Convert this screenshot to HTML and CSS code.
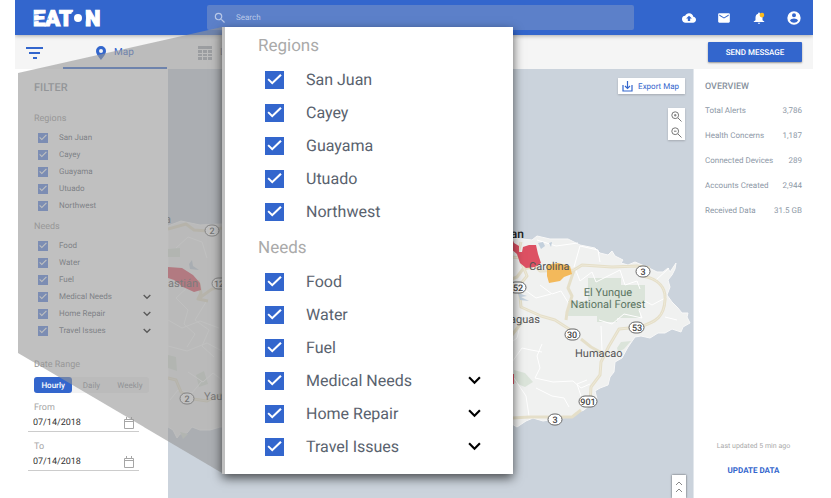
FILE: index.html
```html
<!DOCTYPE html>
<html lang="en">
<head>
<meta charset="utf-8">
<meta name="viewport" content="width=device-width, initial-scale=1">
<title>Eaton Map</title>
<link rel="stylesheet" href="styles.css">
</head>
<body>
<div class="app">
  <header class="topbar">
    <a class="logo" href="#" aria-label="Eaton">
      <svg width="68" height="22" viewBox="0 0 68 22">
        <g class="logo-text"><text x="-1" y="19">EAT</text><text x="51" y="19">N</text></g>
        <path d="M0 8 15 6.500M0 14 15 12" stroke="#3366cd" stroke-width=".6"/>
        <circle cx="44" cy="11" r="8" fill="#3366cd"/>
        <circle cx="44" cy="11" r="4" fill="#fff"/>
      </svg>
    </a>
    <label class="search">
      <svg width="14" height="14" viewBox="0 0 24 24"><path fill="currentColor" d="M15.500 14h-.79l-.28-.27A6.470 6.470 0 0 0 16 9.500 6.500 6.500 0 1 0 9.500 16c1.610 0 3.090-.59 4.230-1.570l.27.28v.79l5 4.990L20.490 19l-4.990-5zm-6 0C7.010 14 5 11.990 5 9.500S7.010 5 9.500 5 14 7.010 14 9.500 11.990 14 9.500 14z"/></svg>
      <input type="text" placeholder="Search" aria-label="Search">
    </label>
    <nav class="actions">
      <button aria-label="Upload"><svg width="14" height="14" viewBox="0 0 24 24"><path fill="currentColor" d="M19.350 10.040A7.490 7.490 0 0 0 12 4C9.110 4 6.600 5.640 5.350 8.040A5.994 5.994 0 0 0 0 14c0 3.310 2.690 6 6 6h13c2.760 0 5-2.240 5-5 0-2.640-2.050-4.780-4.650-4.960zM14 13v4h-4v-4H7l5-5 5 5h-3z"/></svg></button>
      <button aria-label="Mail"><svg width="14" height="14" viewBox="0 0 24 24"><path fill="currentColor" d="M20 4H4c-1.100 0-1.990.9-1.990 2L2 18c0 1.100.9 2 2 2h16c1.100 0 2-.9 2-2V6c0-1.100-.9-2-2-2zm0 4-8 5-8-5V6l8 5 8-5v2z"/></svg></button>
      <button aria-label="Notifications"><svg width="14" height="14" viewBox="0 0 24 24"><path fill="currentColor" d="M12 22c1.100 0 2-.9 2-2h-4c0 1.100.89 2 2 2zm6-6v-5c0-3.070-1.640-5.640-4.500-6.320V4a1.500 1.500 0 0 0-3 0v.68C7.630 5.360 6 7.920 6 11v5l-3 2v1h18v-1l-3-2z"/><circle cx="17" cy="7" r="4" fill="#fdbb1d"/></svg></button>
      <button aria-label="Account"><svg width="16" height="16" viewBox="0 0 24 24"><path fill="currentColor" d="M12 2a10 10 0 1 0 0 20 10 10 0 0 0 0-20zm0 3a3 3 0 1 1 0 6 3 3 0 0 1 0-6zm0 14.200a7.200 7.200 0 0 1-6-3.220c.03-1.990 4-3.080 6-3.080s5.970 1.090 6 3.080a7.200 7.200 0 0 1-6 3.220z"/></svg></button>
    </nav>
  </header>

  <div class="toolbar">
    <button class="filter-toggle" aria-label="Filter"><svg width="18" height="12" viewBox="0 0 18 12"><path d="M0 1h17M3 6h11M7 11h4" stroke="#3366cd" stroke-width="2"/></svg></button>
    <a class="tab active" href="#"><svg width="10" height="14" viewBox="0 0 10 14"><path fill="#3366cd" fill-rule="evenodd" d="M5 0a5 5 0 0 0-5 5c0 3.500 5 9 5 9s5-5.500 5-9a5 5 0 0 0-5-5zm0 3a2 2 0 1 1 0 4 2 2 0 0 1 0-4z"/></svg>Map</a>
    <a class="tab" href="#"><svg width="14" height="14" viewBox="0 0 14 14"><path d="M0 0h14v3H0zM0 4h4v3H0zM5 4h4v3H5zM10 4h4v3h-4zM0 8h4v2H0zM5 8h4v2H5zM10 8h4v2h-4zM0 11h4v3H0zM5 11h4v3H5zM10 11h4v3h-4z" fill="#a3a9b0"/></svg>List</a>
    <button class="send">SEND MESSAGE</button>
  </div>

  <main class="content">
    <aside class="filters">
      <h2>FILTER</h2>
      <h3>Regions</h3>
      <ul class="checks">
        <li><label><input type="checkbox" checked>San Juan</label></li>
        <li><label><input type="checkbox" checked>Cayey</label></li>
        <li><label><input type="checkbox" checked>Guayama</label></li>
        <li><label><input type="checkbox" checked>Utuado</label></li>
        <li><label><input type="checkbox" checked>Northwest</label></li>
      </ul>
      <h3>Needs</h3>
      <ul class="checks">
        <li><label><input type="checkbox" checked>Food</label></li>
        <li><label><input type="checkbox" checked>Water</label></li>
        <li><label><input type="checkbox" checked>Fuel</label></li>
        <li><label><input type="checkbox" checked>Medical Needs</label><button class="more" aria-label="Expand Medical Needs"><svg viewBox="0 0 12 8"><path d="m1 1 5 5 5-5"/></svg></button></li>
        <li><label><input type="checkbox" checked>Home Repair</label><button class="more" aria-label="Expand Home Repair"><svg viewBox="0 0 12 8"><path d="m1 1 5 5 5-5"/></svg></button></li>
        <li><label><input type="checkbox" checked>Travel Issues</label><button class="more" aria-label="Expand Travel Issues"><svg viewBox="0 0 12 8"><path d="m1 1 5 5 5-5"/></svg></button></li>
      </ul>
      <h3 class="range-title">Date Range</h3>
      <div class="segments"><button class="on">Hourly</button><button>Daily</button><button>Weekly</button></div>
      <label class="date"><span>From</span><span class="date-row"><input type="text" value="07/14/2018"><svg width="10" height="12" viewBox="0 0 10 12"><path d="M.5 2.500h9v9h-9zM.5 4.500h9M2.500 0v2M7.500 0v2" fill="none" stroke="#a6a6a6"/></svg></span></label>
      <label class="date"><span>To</span><span class="date-row"><input type="text" value="07/14/2018"><svg width="10" height="12" viewBox="0 0 10 12"><path d="M.5 2.500h9v9h-9zM.5 4.500h9M2.500 0v2M7.500 0v2" fill="none" stroke="#a6a6a6"/></svg></span></label>
    </aside>

    <section class="map" aria-label="Map">
      <svg class="map-art" viewBox="168 69 526 429" preserveAspectRatio="xMinYMin slice">
        <path class="land" d="M168 226 181 221 200 225 222 224 300 230 420 228 480 233 512 238 532 240 537 236 550 239 568 239 580 245 595 248 600 253 608 255 612 251 615 256 623 260 621 263 628 265 635 262 647 267 657 272 663 272 668 268 670 272 676 263 675 269 672 275 668 280 670 287 667 295 672 302 678 308 682 313 688 313 687 317 690 323 683 327 681 332 672 329 665 333 658 333 650 338 641 336 635 337 628 347 622 358 615 362 614 372 610 377 608 385 600 388 595 391 597 399 584 410 577 413 568 417 543 421 533 418 526 421 517 427 512 424 480 430 400 427 300 428 220 427 210 430 200 430 192 427 187 433 180 434 177 438 173 430 168 427Z"/>
        <path class="forest" d="M588 278h33v7h24v17h-5v16h-23v4h-20v-6h-29v-15h20zM168 249l12-1v9h-12zM617 348l4-6 10-1-7 8-6 3zM514 370l11 3 8 9-8 5-12-5zM168 355l8 2 1 14-9-3zM196 375l8-4 4 13-9 3zM180 432l8 2-5 5z"/>
        <g class="minor">
          <path d="M574 267 580 246 598 250 600 262M537 240 556 246 578 243M575 268 580 281 592 272 596 282 620 270 625 285 637 281 640 289M667 297l-15 8-7-4-6 9 3 8-18-4-12 10-13-4M540 285l12 9 9-3 8 13-3 10M522 288l14 10 15-4M602 350l-1-24M512 362l10-14 9 2 11 2M542 344l-5 12 3 12-5 10 18 4 20-1 8 7 9-4M536 388l16 8 12 2 5 9M514 378l12 18 3 20M581 396l-4-12 10-4M519 330l-2 8-4 3M655 281l14-13M665 317l12 3M190 285l-14 13 12 12-4 14 11 10-8 13M206 302l-11 18 14 10-7 16 12 11M168 320l14 8 18-7 19 7M168 346l19 5 20-8 15 8M188 372l15 10 10-9 9 7M170 400l8-10 14 3 10-12M176 248l12-11 14 5 5 16"/>
        </g>
        <g class="road">
          <path d="M168 229l18-5 8 6 14 1 14-3M198 280l3 13-3 6 10 2M198 299l14-10 10-2M168 378l8 2 5 12 12 7 14 2 15-7M512 257l16 2 12 12 34-1 8-5 30 2 25-1 13 2M643 276c16 3 23 12 22 24-1 16-8 22-26 27l-20 2-10 17-8 16-1 13-9 12-1 16M512 279l5-2 6-8 10-2M521 242l-3 12 9 22-8 10 2 21 20 9 14 4 14 9 8 8M574 270l-6 18 4 8-5 16-1 8M512 335l10-13M581 339l10 8 11 6M512 418l18-1h42l9-7"/>
        </g>
        <g class="road-core">
          <path d="M168 378l8 2 5 12 12 7 14 2 15-7M512 257l16 2 12 12 34-1 8-5 30 2 25-1 13 2M643 276c16 3 23 12 22 24-1 16-8 22-26 27l-20 2-10 17-8 16-1 13-9 12-1 16M521 242l-3 12 9 22-8 10 2 21 20 9 14 4 14 9 8 8"/>
        </g>
        <path class="water" d="M538 243l5-1 2 4-4 3zM549 243l3-1-1 5zM518 293l9 3-6 1 8 4-9-1zM189 264l3-4 1 6 6 4-9-1zM520 322l7-5-6 2z"/>
        <path class="red" d="M168 267l14 1 11 7 7 8 1 7-7 2-11-5-9-7-6-2zM512 238l2 5 5 3 0 6 3 0 1-5 6-2 7 0 2 9 3 9-6 4-9 1-6-5-3-9-6-5zM512 374h2v10h-2z"/>
        <path class="orange" d="M547 265l11-2 12 3 2 8-8 3-4 4-11 2-2-7z"/>
        <g class="place">
          <text x="204" y="400">Yauco</text>
          <text x="198" y="287" text-anchor="end">bastián</text>
          <text x="171" y="223" text-anchor="end">a</text>
          <text x="529" y="270">Carolina</text>
          <text x="540" y="323" text-anchor="end">Caguas</text>
          <text x="575" y="357">Humacao</text>
          <text class="city" x="524" y="238" text-anchor="end">San Juan</text>
          <g class="park" text-anchor="middle"><text x="608" y="296">El Yunque</text><text x="608" y="308">National Forest</text></g>
        </g>
        <g class="shield">
          <rect x="205" y="225" width="14" height="11" rx="6"/><text x="212" y="234">2</text>
          <rect x="212" y="278" width="22" height="11" rx="6"/><text x="219" y="287">12</text>
          <rect x="180" y="393" width="14" height="11" rx="6"/><text x="187" y="402">2</text>
          <rect x="636" y="266" width="14" height="11" rx="6"/><text x="643" y="275">3</text>
          <rect x="509" y="282" width="17" height="11" rx="6"/><text x="518" y="291">52</text>
          <rect x="629" y="322" width="15" height="11" rx="6"/><text x="637" y="331">53</text>
          <rect x="565" y="329" width="15" height="11" rx="6"/><text x="572" y="338">30</text>
          <rect x="579" y="396" width="18" height="11" rx="6"/><text x="588" y="405">901</text>
          <rect x="548" y="414" width="14" height="11" rx="6"/><text x="555" y="423">3</text>
        </g>
      </svg>
      <div class="map-tools">
        <button class="export"><svg width="11" height="11" viewBox="0 0 11 11"><path d="M1 4v6h9V4M5.500 0v7M3 5l2.500 2.500L8 5" fill="none" stroke="#3366cd" stroke-width="1.200"/></svg>Export Map</button>
        <div class="zoom">
          <button aria-label="Zoom in"><svg width="11" height="11" viewBox="0 0 11 11"><path d="M7 7l3.500 3.500M3 4.200h2.500M4.200 3v2.500" /><circle cx="4.200" cy="4.200" r="3.400"/></svg></button>
          <button aria-label="Zoom out"><svg width="11" height="11" viewBox="0 0 11 11"><path d="M7 7l3.500 3.500M3 4.200h2.500"/><circle cx="4.200" cy="4.200" r="3.400"/></svg></button>
        </div>
      </div>
      <button class="drawer" aria-label="Expand panel"><svg width="8" height="12" viewBox="0 0 8 12"><path d="m1 4 3-3 3 3M1 11l3-3 3 3"/></svg></button>
    </section>

    <aside class="overview">
      <h2>OVERVIEW</h2>
      <dl>
        <div><dt>Total Alerts</dt><dd>3,786</dd></div>
        <div><dt>Health Concerns</dt><dd>1,187</dd></div>
        <div><dt>Connected Devices</dt><dd>289</dd></div>
        <div><dt>Accounts Created</dt><dd>2,944</dd></div>
        <div><dt>Received Data</dt><dd>31.5 GB</dd></div>
      </dl>
      <p>Last updated 5 min ago</p>
      <button class="update">UPDATE DATA</button>
    </aside>
  </main>

  <svg class="beam" width="207" height="447" viewBox="0 0 207 447"><path d="M3 46 207 0V446L3 326Z"/></svg>

  <section class="callout" aria-label="Filter detail">
    <h3>Regions</h3>
    <ul class="checks">
      <li><label><input type="checkbox" checked>San Juan</label></li>
      <li><label><input type="checkbox" checked>Cayey</label></li>
      <li><label><input type="checkbox" checked>Guayama</label></li>
      <li><label><input type="checkbox" checked>Utuado</label></li>
      <li><label><input type="checkbox" checked>Northwest</label></li>
    </ul>
    <h3>Needs</h3>
    <ul class="checks">
      <li><label><input type="checkbox" checked>Food</label></li>
      <li><label><input type="checkbox" checked>Water</label></li>
      <li><label><input type="checkbox" checked>Fuel</label></li>
      <li><label><input type="checkbox" checked>Medical Needs</label><button class="more" aria-label="Expand Medical Needs"><svg viewBox="0 0 12 8"><path d="m1 1 5 5 5-5"/></svg></button></li>
      <li><label><input type="checkbox" checked>Home Repair</label><button class="more" aria-label="Expand Home Repair"><svg viewBox="0 0 12 8"><path d="m1 1 5 5 5-5"/></svg></button></li>
      <li><label><input type="checkbox" checked>Travel Issues</label><button class="more" aria-label="Expand Travel Issues"><svg viewBox="0 0 12 8"><path d="m1 1 5 5 5-5"/></svg></button></li>
    </ul>
  </section>
</div>
</body>
</html>
```
FILE: styles.css
```css
* { box-sizing: border-box; }
body {
  margin: 0;
  padding: 0 18px 0 15px;
  background: #fff;
  font-family: Roboto, "Liberation Sans", sans-serif;
  font-size: 9px;
  color: #59626e;
  text-rendering: geometricPrecision;
}
button {
  border: 0;
  padding: 0;
  margin: 0;
  background: none;
  font: inherit;
  color: inherit;
  text-rendering: inherit;
}
input { font: inherit; color: inherit; margin: 0; text-rendering: inherit; }
a { color: inherit; text-decoration: none; }
h2, h3, p, dl, dd, ul { margin: 0; padding: 0; }
ul { list-style: none; }
svg { display: block; flex: none; }

.app {
  position: relative;
  display: flex;
  flex-direction: column;
  min-height: 100vh;
  overflow: hidden;
}

.topbar {
  display: flex;
  align-items: center;
  height: 35px;
  padding: 0 2px 0 19px;
  background: #3366cd;
  color: #fff;
  box-shadow: 0 1px 4px rgba(0, 0, 0, .3);
  z-index: 1;
}
.logo svg { overflow: visible; }
.logo-text { font-size: 22px; font-weight: 900; fill: #fff; stroke: #fff; }
.search {
  flex: 1;
  display: flex;
  align-items: center;
  gap: 9px;
  height: 25px;
  margin: 0 37px 0 105px;
  padding-left: 6px;
  border-radius: 2px;
  background: #5c80c9;
  color: #b9c8e8;
}
.search input {
  flex: 1;
  min-width: 0;
  border: 0;
  padding: 0;
  background: none;
  font-size: 8px;
}
.search input::placeholder { color: #b9c8e8; opacity: 1; }
.actions { display: flex; }
.actions button { display: grid; place-items: center; width: 35px; height: 35px; }

.toolbar {
  display: flex;
  align-items: stretch;
  height: 34px;
  padding-right: 11px;
  background: #f5f5f5;
}
.filter-toggle { display: grid; place-items: center; width: 40px; padding-top: 2px; }
.tab {
  display: flex;
  align-items: center;
  justify-content: center;
  gap: 8px;
  width: 104px;
  margin-left: 8px;
  padding-top: 3px;
  border-bottom: 2px solid transparent;
  font-size: 10px;
  color: #8b929c;
}
.tab + .tab { margin-left: 0; padding-right: 4px; }
.tab.active { border-color: #3366cd; color: #3366cd; }
.send {
  align-self: center;
  width: 94px;
  height: 20px;
  margin-left: auto;
  border-radius: 1px;
  background: #3366cd;
  box-shadow: 0 1px 2px rgba(0, 0, 0, .4);
  color: #fff;
  font-size: 8px;
  font-weight: 500;
}

.content { flex: 1; display: flex; }
.filters { width: 153px; padding: 12px 19px 0; }
.filters h2 { font-size: 11px; line-height: 14px; font-weight: 500; color: #8f959c; }
.filters h3 {
  margin-top: 17px;
  font-size: 9px;
  line-height: 14px;
  font-weight: 400;
  color: #999;
}
.checks li { display: flex; align-items: center; justify-content: space-between; }
.checks label { display: flex; align-items: center; }
.checks input {
  appearance: none;
  position: relative;
  background: #3366cd;
}
.checks input::after {
  content: "";
  position: absolute;
  inset: 0;
  background: #fff;
  clip-path: polygon(13% 52%, 20% 44%, 38% 62%, 80% 20%, 88% 28%, 38% 78%);
}
.more path { fill: none; stroke: #000; stroke-width: 2; }
.filters .checks { padding: 3px 0 0 4px; margin-right: -18px; font-size: 8px; color: #59626e; }
.filters .checks li { height: 17px; padding-right: 16px; }
.filters .checks input { width: 10px; height: 10px; margin-right: 11px; background: #5581de; }
.filters .checks + h3 { margin-top: 6px; }
.filters .more svg { width: 8px; height: 6px; }
.filters .checks + .range-title { margin-top: 19px; }
.segments {
  display: flex;
  width: 115px;
  margin-top: 5px;
  border-radius: 3px;
  background: #f2f2f2;
  color: #8a8f96;
  font-size: 8px;
}
.segments button { flex: 1; height: 16px; }
.segments .on { border-radius: 3px; background: #3366cd; color: #fff; font-weight: 500; }
.date { display: block; margin: 8px -10px 0 -6px; color: #a6a6a6; }
.date > span { display: block; padding-left: 6px; line-height: 14px; }
.date .date-row {
  display: flex;
  align-items: center;
  justify-content: space-between;
  width: 111px;
  height: 17px;
  padding: 0 5px;
  border-bottom: 1px solid #ccc;
}
.date input {
  width: 70px;
  border: 0;
  padding: 0;
  background: none;
  color: #333;
  font-size: 9px;
}

.map {
  position: relative;
  flex: 1;
  display: flex;
  flex-direction: column;
  align-items: flex-end;
  justify-content: space-between;
  padding: 9px 8px 0 0;
  overflow: hidden;
  background: #cbd3dc;
  border-right: 1px solid #e2e7ec;
}
.map-art { position: absolute; top: 0; left: 0; width: 526px; height: 429px; }
.land { fill: #f0f1f0; stroke: #f8f8f8; }
.forest { fill: #dbe4da; }
.water { fill: #c3d0dc; }
.minor { fill: none; stroke: #fff; stroke-width: 1; }
.road { fill: none; stroke: #e5dfc9; stroke-width: 3; stroke-linejoin: round; }
.road-core { fill: none; stroke: #eee9d8; stroke-width: 1; }
.red { fill: #dd5163; }
.orange { fill: #f3b95b; }
.place { font-size: 11px; fill: #555; }
.place .city { font-size: 12px; font-weight: 500; fill: #222; }
.place .park { fill: #5b7562; }
.shield rect { fill: #fff; stroke: #666; }
.shield text { font-size: 9px; font-weight: 500; fill: #444; text-anchor: middle; }

.map-tools { position: relative; display: flex; flex-direction: column; align-items: flex-end; gap: 14px; }
.export {
  display: flex;
  align-items: center;
  gap: 5px;
  height: 16px;
  padding: 0 6px 0 4px;
  background: #fff;
  box-shadow: 0 1px 2px rgba(0, 0, 0, .2);
  color: #3366cd;
  font-size: 8px;
}
.zoom { background: #fff; box-shadow: 0 1px 2px rgba(0, 0, 0, .2); }
.zoom button { display: grid; place-items: center; width: 17px; height: 16px; }
.zoom svg { fill: none; stroke: #777; }
.drawer {
  position: relative;
  display: grid;
  place-items: center;
  width: 14px;
  height: 23px;
  margin-right: -1px;
  background: #fff;
  box-shadow: 0 0 2px rgba(0, 0, 0, .6);
}
.drawer svg { fill: none; stroke: #888; }

.overview {
  display: flex;
  flex-direction: column;
  width: 119px;
  padding: 11px 11px 20px;
  color: #8d98a6;
}
.overview h2 { font-size: 9px; line-height: 14px; font-weight: 500; color: #87919d; }
.overview dl { display: grid; gap: 11px; margin-top: 10px; font-size: 8px; }
.overview dl div { display: flex; justify-content: space-between; line-height: 14px; }
.overview p { margin-top: auto; font-size: 7px; line-height: 14px; text-align: center; color: #a9a9a9; }
.update { margin-top: 11px; font-size: 8px; line-height: 14px; font-weight: 700; color: #3366cd; }

.beam { position: absolute; top: 27px; left: 0; z-index: 2; fill: rgba(150, 150, 150, .6); pointer-events: none; }

.callout {
  position: absolute;
  top: 27px;
  left: 207px;
  z-index: 3;
  width: 291px;
  padding: 7px 32px 11px 33px;
  border-left: 3px solid #bfbfbf;
  background: #fff;
  box-shadow: 0 4px 10px rgba(0, 0, 0, .65);
}
.callout h3 { font-size: 17px; line-height: 24px; font-weight: 400; color: #aaa; }
.callout .checks + h3 { margin-top: 8px; }
.callout .checks { padding: 5px 0 0 7px; font-size: 16px; }
.callout .checks li { height: 33px; }
.callout .checks input { width: 19px; height: 18px; margin-right: 22px; }
.callout .more svg { width: 13px; height: 9px; }
```
